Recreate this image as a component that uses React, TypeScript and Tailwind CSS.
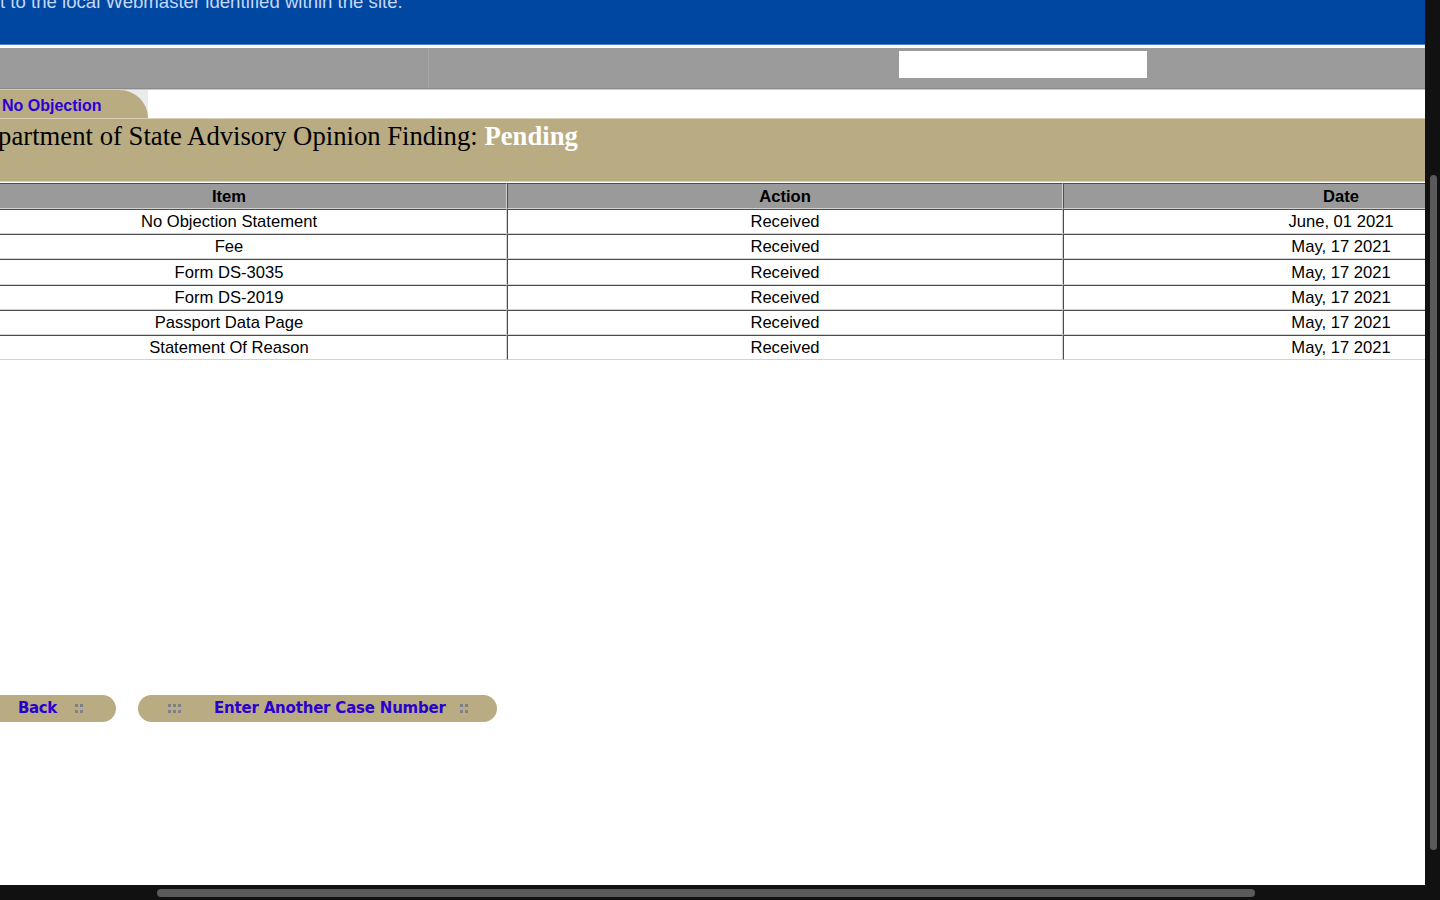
const rows = [
  { item: "No Objection Statement", action: "Received", date: "June, 01 2021" },
  { item: "Fee", action: "Received", date: "May, 17 2021" },
  { item: "Form DS-3035", action: "Received", date: "May, 17 2021" },
  { item: "Form DS-2019", action: "Received", date: "May, 17 2021" },
  { item: "Passport Data Page", action: "Received", date: "May, 17 2021" },
  { item: "Statement Of Reason", action: "Received", date: "May, 17 2021" },
];

function Dots({ cols }: { cols: number }) {
  return (
    <span className="grid gap-x-[2px] gap-y-[3px]" style={{ gridTemplateColumns: `repeat(${cols}, 3px)` }}>
      {Array.from({ length: cols * 2 }).map((_, i) => (
        <span key={i} className="block h-[3px] w-[3px] bg-[#7d808a]" />
      ))}
    </span>
  );
}

const cell =
  "p-0 text-center align-middle leading-[22px] border border-t-[#4c4c4c] border-l-[#4c4c4c] border-b-[#d2d2d2] border-r-[#d2d2d2]";

export default function App() {
  return (
    <div className="flex h-[900px] w-[1440px] flex-col overflow-hidden bg-[#111111] font-['Liberation_Sans',Arial,sans-serif]">
      <div className="flex h-[885px]">
        <div className="h-[885px] w-[1425px] overflow-hidden bg-white">
          {/* top blue banner, scrolled so only the bottom of the notice shows */}
          <div className="h-[44px] overflow-hidden bg-[#0047a2]">
            <p className="mt-[-12px] whitespace-nowrap text-[18.6px] text-[#c4d8f8]">
              t to the local Webmaster identified within the site.
            </p>
          </div>
          <div className="h-px bg-[#4a7fc9]" />
          <div className="h-[3px] bg-white" />
          <div className="flex h-[40px] bg-[#9b9b9b]">
            <div className="w-[428px]" />
            <div className="w-px bg-[#a6a6a6]" />
            <div className="w-[470px]" />
            <div className="mt-[3px] h-[27px] w-[248px] bg-white" />
          </div>
          <div className="h-px bg-[#8b8b8b]" />
          <div className="h-px bg-[#cacaca]" />

          <div className="ml-[-49px] w-[1668px]">
            {/* tab */}
            <div className="flex h-[28px]">
              <div className="w-[197px] bg-[#ebebeb]">
                <div className="flex h-[28px] items-center rounded-tr-[30px] bg-[#baac82] pl-[51px] pt-[3px]">
                  <span className="text-[16px] font-bold text-[#2a00d8]">No Objection</span>
                </div>
              </div>
            </div>

            {/* heading */}
            <div className="h-px bg-[#d8d0b4]" />
            <div className="h-[62px] bg-[#baac82] pl-[16px] pt-[1px]">
              <h1 className="whitespace-nowrap font-['Liberation_Serif','Times_New_Roman',serif] text-[26.7px] leading-[32px] text-black">
                Department of State Advisory Opinion Finding:{" "}
                <span className="font-bold text-white">Pending</span>
              </h1>
            </div>
            <div className="h-px bg-[#d8d0b4]" />
            <div className="h-px bg-white" />

            {/* status table */}
            <table className="w-[1668px] table-fixed border-separate border-spacing-0 text-[16.6px] text-black">
              <thead>
                <tr>
                  <th className={`${cell} h-[26px] bg-[#9a9a9a] pt-[2px] font-bold`}>Item</th>
                  <th className={`${cell} h-[26px] bg-[#9a9a9a] pt-[2px] font-bold`}>Action</th>
                  <th className={`${cell} h-[26px] bg-[#9a9a9a] pt-[2px] font-bold`}>Date</th>
                </tr>
              </thead>
              <tbody>
                {rows.map((r, i) => {
                  const h = i === 2 ? "h-[26px]" : "h-[25px]";
                  return (
                    <tr key={r.item}>
                      <td className={`${cell} ${h} bg-white pt-[1px]`}>{r.item}</td>
                      <td className={`${cell} ${h} bg-white pt-[1px]`}>{r.action}</td>
                      <td className={`${cell} ${h} bg-white pt-[1px]`}>{r.date}</td>
                    </tr>
                  );
                })}
              </tbody>
            </table>

            {/* buttons */}
            <div className="mt-[335px] flex font-['DejaVu_Sans',Verdana,sans-serif] text-[15px] font-bold text-[#2a00d0]">
              <div className="flex h-[27px] w-[165px] items-center rounded-r-full bg-[#baac82] pl-[67px]">
                <span className="tracking-[-0.4px]">Back</span>
                <span className="ml-[18px]"><Dots cols={2} /></span>
              </div>
              <div className="ml-[22px] flex h-[27px] w-[359px] items-center rounded-full bg-[#baac82] pl-[30px]">
                <Dots cols={3} />
                <span className="ml-[33px] tracking-[-0.2px]">Enter Another Case Number</span>
                <span className="ml-[14px]"><Dots cols={2} /></span>
              </div>
            </div>
          </div>
        </div>
        <div className="w-[15px] pl-[5px] pt-[175px]">
          <div className="h-[675px] w-[7px] rounded-full bg-[#5a5a5a]" />
        </div>
      </div>
      <div className="h-[15px] pl-[157px] pt-[4px]">
        <div className="h-[8px] w-[1098px] rounded-full bg-[#5a5a5a]" />
      </div>
    </div>
  );
}
